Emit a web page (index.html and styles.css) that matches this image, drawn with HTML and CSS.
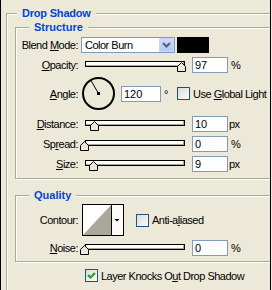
FILE: index.html
```html
<!DOCTYPE html>
<html lang="en">
<head>
    <meta charset="UTF-8">
    <title>Layer Style - Drop Shadow</title>
    <link rel="stylesheet" href="styles.css">
</head>
<body>
<div class="frame">
    <fieldset class="group outer">
        <legend>Drop Shadow</legend>

        <fieldset class="group inner">
            <legend>Structure</legend>

            <div class="row">
                <span class="lbl">Blend <u>M</u>ode:</span>
                <div class="combo">
                    <span class="combo-text">Color Burn</span>
                    <span class="combo-btn">
                        <svg width="15" height="14" viewBox="0 0 15 14"><polyline points="4,5 7.5,8.5 11,5" fill="none" stroke="#4d6185" stroke-width="2"/></svg>
                    </span>
                </div>
                <span class="swatch"></span>
            </div>

            <div class="row">
                <span class="lbl"><u>O</u>pacity:</span>
                <div class="slider">
                    <div class="track"></div>
                    <svg class="thumb" style="left:97px" width="9" height="10" viewBox="0 0 9 10"><path d="M0.5 4.5 L4.5 0.5 L8.5 4.5 L8.5 9.5 L0.5 9.5 Z" fill="#ece9d8" stroke="#000"/></svg>
                </div>
                <input class="num" type="text" value="97">
                <span class="unit">%</span>
            </div>

            <div class="row row-angle">
                <span class="lbl"><u>A</u>ngle:</span>
                <svg class="dial" width="35" height="35" viewBox="0 0 35 35">
                    <circle cx="17.5" cy="17.5" r="15.5" fill="none" stroke="#000" stroke-width="2"/>
                    <line x1="17.5" y1="17.5" x2="10" y2="4.5" stroke="#000" stroke-width="1"/>
                    <rect x="16" y="16" width="3" height="3" fill="#000"/>
                </svg>
                <input class="num wide" type="text" value="120">
                <span class="deg">°</span>
                <span class="check"></span>
                <span class="check-text">Use <u>G</u>lobal Light</span>
            </div>

            <div class="row">
                <span class="lbl"><u>D</u>istance:</span>
                <div class="slider">
                    <div class="track"></div>
                    <svg class="thumb" style="left:10px" width="9" height="10" viewBox="0 0 9 10"><path d="M0.5 4.5 L4.5 0.5 L8.5 4.5 L8.5 9.5 L0.5 9.5 Z" fill="#ece9d8" stroke="#000"/></svg>
                </div>
                <input class="num" type="text" value="10">
                <span class="unit px">px</span>
            </div>

            <div class="row">
                <span class="lbl">Sp<u>r</u>ead:</span>
                <div class="slider">
                    <div class="track"></div>
                    <svg class="thumb" style="left:0px" width="9" height="10" viewBox="0 0 9 10"><path d="M0.5 4.5 L4.5 0.5 L8.5 4.5 L8.5 9.5 L0.5 9.5 Z" fill="#ece9d8" stroke="#000"/></svg>
                </div>
                <input class="num" type="text" value="0">
                <span class="unit">%</span>
            </div>

            <div class="row last">
                <span class="lbl"><u>S</u>ize:</span>
                <div class="slider">
                    <div class="track"></div>
                    <svg class="thumb" style="left:9px" width="9" height="10" viewBox="0 0 9 10"><path d="M0.5 4.5 L4.5 0.5 L8.5 4.5 L8.5 9.5 L0.5 9.5 Z" fill="#ece9d8" stroke="#000"/></svg>
                </div>
                <input class="num" type="text" value="9">
                <span class="unit px">px</span>
            </div>
        </fieldset>

        <fieldset class="group inner quality">
            <legend>Quality</legend>

            <div class="row row-contour">
                <span class="lbl">Contour:</span>
                <div class="contour">
                    <svg class="contour-preview" width="28" height="30" viewBox="0 0 28 30">
                        <rect width="28" height="30" fill="#fff"/>
                        <polygon points="0,30 28,0 28,30" fill="#aba799"/>
                    </svg>
                    <span class="contour-btn">
                        <svg width="10" height="30" viewBox="0 0 10 30"><polygon points="2.5,14 7.5,14 5,16.5" fill="#000"/></svg>
                    </span>
                </div>
                <span class="check check-aa"></span>
                <span class="check-text">Anti-a<u>l</u>iased</span>
            </div>

            <div class="row last">
                <span class="lbl"><u>N</u>oise:</span>
                <div class="slider">
                    <div class="track"></div>
                    <svg class="thumb" style="left:0px" width="9" height="10" viewBox="0 0 9 10"><path d="M0.5 4.5 L4.5 0.5 L8.5 4.5 L8.5 9.5 L0.5 9.5 Z" fill="#ece9d8" stroke="#000"/></svg>
                </div>
                <input class="num" type="text" value="0">
                <span class="unit">%</span>
            </div>
        </fieldset>

        <div class="row knock">
            <span class="check">
                <svg width="11" height="11" viewBox="0 0 11 11"><polyline points="2,5 4.5,7.5 9,3" fill="none" stroke="#21a121" stroke-width="2.2"/></svg>
            </span>
            <span class="check-text">Layer Knocks O<u>u</u>t Drop Shadow</span>
        </div>
    </fieldset>
</div>
</body>
</html>
```

FILE: styles.css
```css
* {
    box-sizing: border-box;
}
html, body {
    margin: 0;
    padding: 0;
}
body {
    background: #ece9d8;
    font-family: "Liberation Sans", Arial, sans-serif;
    font-size: 11px;
    letter-spacing: -0.5px;
    color: #000;
}
.frame {
    width: 271px;
    height: 290px;
    border-left: 1px solid #000;
    border-right: 1px solid #000;
    overflow: hidden;
    padding: 6px 0 0 5px;
}
.group {
    margin: 0;
    min-width: 0;
    border: 1px solid #aca899;
    box-shadow: inset 1px 1px 0 #fff, 1px 1px 0 #fff;
}
.group legend {
    background: #ece9d8;
    color: #0046d5;
    font-weight: bold;
    font-size: 11px;
    letter-spacing: -0.2px;
    line-height: 14px;
    padding: 0 5px;
}
.outer {
    width: 320px;
    height: 330px;
    padding: 0 0 0 8px;
}
.outer > legend {
    margin-left: 2px;
}
.inner {
    padding: 3px 0 6px 0;
}
.inner > legend {
    margin-left: 13px;
    letter-spacing: 0;
}
.quality {
    margin-top: 9px;
    padding: 2px 0 5px 0;
}

/* rows */
.row {
    display: flex;
    align-items: center;
    height: 16px;
    margin-bottom: 4px;
}
.row.last {
    margin-bottom: 0;
}
.row-angle {
    height: 35px;
    margin-top: -1px;
    margin-bottom: 5px;
}
.row-contour {
    height: 32px;
}
.lbl {
    width: 62px;
    text-align: right;
    line-height: 16px;
    white-space: nowrap;
}

/* combo box */
.combo {
    display: flex;
    width: 94px;
    height: 16px;
    margin-left: 3px;
    border: 1px solid #7f9db9;
    background: #fff;
}
.combo-text {
    flex: 1;
    padding-left: 3px;
    line-height: 14px;
}
.combo-btn {
    width: 15px;
    height: 14px;
    border-radius: 2px;
    background: linear-gradient(#cfdcfb, #b3c7f5);
    box-shadow: inset 0 0 0 1px #c6d5fa;
}
.combo-btn svg {
    display: block;
}
.swatch {
    width: 32px;
    height: 16px;
    margin-left: 2px;
    background: #000;
}

/* slider */
.slider {
    position: relative;
    width: 112px;
    height: 16px;
    margin-left: 2px;
}
.track {
    width: 100px;
    height: 6px;
    margin: 4px 0 0 5px;
    border: 1px solid #000;
    background: #fffffa;
    box-shadow: inset -1px -1px 0 #aca899;
}
.thumb {
    position: absolute;
    top: 5px;
    display: block;
}

/* number fields */
.num {
    width: 36px;
    height: 16px;
    margin: 0;
    padding: 0 2px;
    border: 1px solid #7f9db9;
    background: #fff;
    font-family: inherit;
    font-size: 11px;
    color: #000;
    outline: none;
}
.num.wide {
    width: 40px;
    margin-left: 5px;
}
.unit {
    margin-left: 3px;
}
.unit.px {
    margin-left: 1px;
}
.deg {
    width: 16px;
    padding-left: 3px;
}

/* angle dial */
.dial {
    display: block;
    margin-left: 3px;
}

/* checkboxes */
.check {
    width: 13px;
    height: 13px;
    border: 1px solid #1c5180;
    background: linear-gradient(135deg, #dcdcd5, #fdfdfb);
    flex-shrink: 0;
}
.check svg {
    display: block;
}
.check-text {
    margin-left: 3px;
    white-space: nowrap;
}
.check-aa {
    margin-left: 12px;
}

/* contour picker */
.contour {
    display: flex;
    width: 42px;
    height: 32px;
    margin-left: 4px;
    border: 1px solid #000;
    background: #fff;
}
.contour-preview {
    display: block;
}
.contour-btn {
    border-left: 1px solid #000;
    width: 12px;
    background: #fbfbf8;
}
.contour-btn svg {
    display: block;
}

.knock {
    height: 13px;
    margin: 7px 0 0 70px;
}
```
